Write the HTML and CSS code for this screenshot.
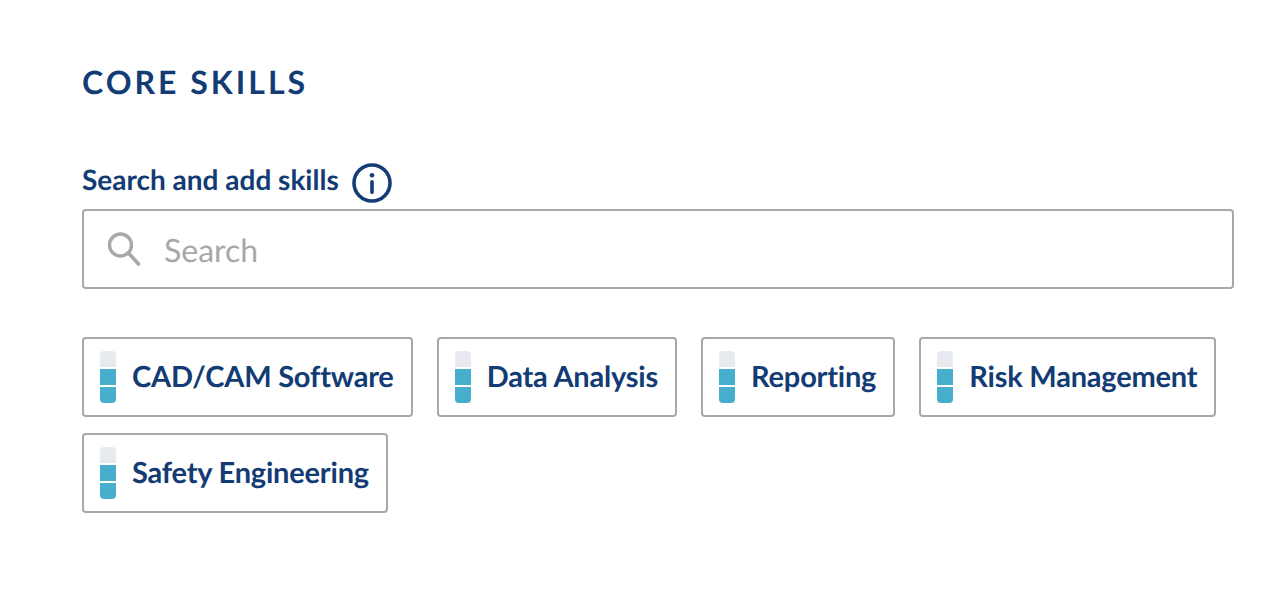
FILE: index.html
```html
<!DOCTYPE html>
<html lang="en">
<head>
<meta charset="utf-8">
<title>Core Skills</title>
<link rel="stylesheet" href="styles.css">
</head>
<body>
<main class="page">
  <h2 class="title">CORE SKILLS</h2>
  <div class="label-row">
    <label class="label">Search and add skills</label>
    <svg class="info" width="40" height="40" viewBox="0 0 40 40" aria-hidden="true">
      <circle cx="20" cy="20" r="18" fill="none" stroke="#133b74" stroke-width="3.6"/>
      <circle cx="20" cy="12.2" r="2.3" fill="#133b74"/>
      <rect x="18.2" y="17" width="3.6" height="14" rx="1.8" fill="#133b74"/>
    </svg>
  </div>
  <div class="search">
    <svg class="search-icon" width="34" height="36" viewBox="0 0 34 36" aria-hidden="true">
      <circle cx="13.5" cy="14" r="11" fill="none" stroke="#a8a8a8" stroke-width="3.4"/>
      <path d="M21.5 22 L31.5 33" fill="none" stroke="#a8a8a8" stroke-width="3.6" stroke-linecap="round"/>
    </svg>
    <span class="placeholder">Search</span>
  </div>
  <ul class="skills">
    <li class="skill"><span class="meter"><i class="seg seg-top"></i><i class="seg seg-mid"></i><i class="seg seg-bot"></i></span><span class="skill-name">CAD/CAM Software</span></li>
    <li class="skill"><span class="meter"><i class="seg seg-top"></i><i class="seg seg-mid"></i><i class="seg seg-bot"></i></span><span class="skill-name">Data Analysis</span></li>
    <li class="skill"><span class="meter"><i class="seg seg-top"></i><i class="seg seg-mid"></i><i class="seg seg-bot"></i></span><span class="skill-name">Reporting</span></li>
    <li class="skill"><span class="meter"><i class="seg seg-top"></i><i class="seg seg-mid"></i><i class="seg seg-bot"></i></span><span class="skill-name">Risk Management</span></li>
    <li class="skill"><span class="meter"><i class="seg seg-top"></i><i class="seg seg-mid"></i><i class="seg seg-bot"></i></span><span class="skill-name">Safety Engineering</span></li>
  </ul>
</main>
</body>
</html>
```
FILE: styles.css
```css
* { box-sizing: border-box; }
html, body { margin: 0; padding: 0; background: #fff; }
body { font-family: Lato, "Liberation Sans", sans-serif; color: #133b74; text-rendering: geometricPrecision; }
.page { width: 1280px; height: 593px; padding: 64px 46px 0 82px; overflow: hidden; }
.title { margin: 0; font-size: 32px; line-height: 36px; font-weight: 700; letter-spacing: 3px; }
.label-row { display: flex; align-items: flex-start; gap: 13px; margin-top: 63px; height: 40px; }
.label { font-size: 28px; line-height: 32px; font-weight: 700; }
.info { display: block; flex: none; }
.search { display: flex; align-items: center; height: 80px; margin-top: 6px; padding-left: 23px; border: 2px solid #a8a8a8; border-radius: 4px; }
.search-icon { display: block; flex: none; }
.placeholder { margin-left: 23px; font-size: 32px; color: #a8a8a8; }
.skills { display: flex; flex-wrap: wrap; gap: 16px 24px; margin: 48px 0 0; padding: 0; list-style: none; }
.skill { display: flex; align-items: center; height: 80px; padding: 0 17px 0 16px; border: 2px solid #a8a8a8; border-radius: 4px; font-size: 29px; font-weight: 700; letter-spacing: -0.2px; white-space: nowrap; }
.skill-name { margin-bottom: 2px; }
.meter { display: flex; flex-direction: column; gap: 2px; width: 16px; height: 52px; margin-right: 16px; border-radius: 4px; overflow: hidden; flex: none; }
.seg { display: block; flex: 1; background: #47aecd; }
.seg-top { background: #e7eaee; }
```
